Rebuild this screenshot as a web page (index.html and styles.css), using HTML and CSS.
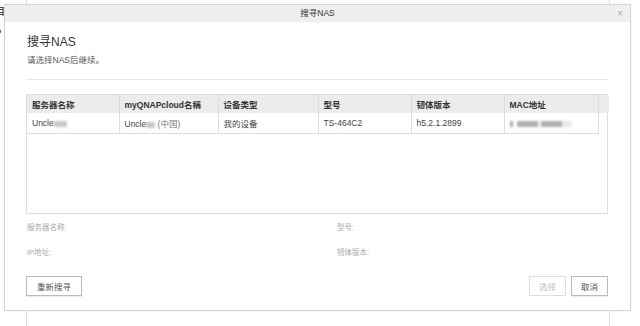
FILE: index.html
```html
<!DOCTYPE html>
<html lang="zh-CN">

<head>
    <meta charset="UTF-8">
    <meta name="viewport" content="width=device-width, initial-scale=1.0">
    <title>搜寻NAS</title>

    <link rel="stylesheet" href="styles.css">
</head>

<body>
    <div class="page">
        <div class="page-text">
            <p>自</p>
            <p>P</p>
        </div>
        <div class="page-panel"></div>
    </div>

    <div class="dialog">
        <div class="dialog-title">
            <span>搜寻NAS</span>
            <button class="close-btn" type="button">×</button>
        </div>

        <div class="dialog-body">
            <h2>搜寻NAS</h2>
            <p class="subtitle">请选择NAS后继续。</p>
            <hr class="separator">

            <div class="table-box">
                <table class="nas-table">
                    <thead>
                        <tr>
                            <th class="col-1">服务器名称</th>
                            <th class="col-2">myQNAPcloud名稱</th>
                            <th class="col-3">设备类型</th>
                            <th class="col-4">型号</th>
                            <th class="col-5">韧体版本</th>
                            <th class="col-6">MAC地址</th>
                            <th class="gutter"></th>
                        </tr>
                    </thead>
                    <tbody>
                        <tr>
                            <td>Uncle<span class="blur blur-name"></span></td>
                            <td>Uncle<span class="blur blur-short"></span> <span class="cn">(中国)</span></td>
                            <td class="muted">我的设备</td>
                            <td>TS-464C2</td>
                            <td>h5.2.1.2899</td>
                            <td><span class="blur blur-mac"></span></td>
                            <td class="gutter"></td>
                        </tr>
                    </tbody>
                </table>
            </div>

            <div class="info-grid">
                <span>服务器名称:</span>
                <span>型号:</span>
                <span>IP地址:</span>
                <span>韧体版本:</span>
            </div>

            <div class="dialog-footer">
                <button class="btn" type="button">重新搜寻</button>
                <div class="footer-right">
                    <button class="btn" type="button" disabled>选择</button>
                    <button class="btn" type="button">取消</button>
                </div>
            </div>
        </div>
    </div>
</body>

</html>
```

FILE: styles.css
```css
* {
    padding: 0;
    margin: 0;
    box-sizing: border-box;
}

body {
    font-family: "Liberation Sans", "Noto Sans CJK SC", sans-serif;
    font-size: 9px;
    color: #333;
    background-color: #fff;
    width: 640px;
    height: 326px;
    overflow: hidden;
}

/* page behind the dialog */
.page {
    display: flex;
    height: 326px;
}

.page-text {
    margin-left: -6px;
    width: 32px;
    font-size: 11px;
    line-height: 22px;
    color: #111;
}

.page-panel {
    width: 584px;
    height: 100%;
    border-left: 1px solid #ddd;
    border-right: 1px solid #ddd;
}

/* dialog */
.dialog {
    position: absolute;
    left: 4px;
    top: 4px;
    width: 627px;
    height: 307px;
    background-color: #fff;
    border: 1px solid #d4d4d4;
    box-shadow: 0 0 2px rgba(0, 0, 0, 0.08);
}

.dialog-title {
    position: relative;
    height: 17px;
    background-color: #efefef;
    text-align: center;
    line-height: 17px;
    font-size: 8.5px;
    color: #333;
}

.close-btn {
    position: absolute;
    right: 7px;
    top: 0;
    border: none;
    background: none;
    font-size: 10px;
    line-height: 17px;
    color: #aaa;
    font-family: "Liberation Sans", sans-serif;
}

.dialog-body {
    padding: 12px 22px 0 21px;
}

h2 {
    font-weight: normal;
    font-size: 12px;
    line-height: 17px;
    color: #333;
    padding-left: 1px;
}

.subtitle {
    margin-top: 3px;
    font-size: 8.5px;
    line-height: 12px;
    color: #555;
    padding-left: 1px;
}

.separator {
    margin-top: 13px;
    border: none;
    border-top: 1px solid #e6e6e6;
}

.table-box {
    margin-top: 14px;
    height: 120px;
    border: 1px solid #dcdcdc;
}

.nas-table {
    border-collapse: collapse;
    table-layout: fixed;
    width: 582px;
}

.nas-table th {
    height: 18px;
    background-color: #ececec;
    text-align: left;
    font-weight: bold;
    font-size: 8.5px;
    color: #333;
    padding: 0 5px;
    border-right: 1px solid #dcdcdc;
}

.nas-table td {
    height: 20px;
    padding: 0 5px;
    font-size: 8.5px;
    color: #444;
    border-right: 1px solid #dcdcdc;
    border-bottom: 1px solid #dcdcdc;
    white-space: nowrap;
}

.nas-table .gutter {
    border: none;
}

.nas-table th.gutter {
    background-color: #ececec;
}

.col-1 { width: 92px; }
.col-2 { width: 99px; }
.col-3 { width: 100px; }
.col-4 { width: 93px; }
.col-5 { width: 93px; }
.col-6 { width: 94px; }
.gutter { width: 11px; }

.muted,
.cn {
    color: #777;
}

.blur {
    display: inline-block;
    height: 6px;
    vertical-align: -1px;
    filter: blur(0.8px);
}

.blur-name {
    width: 13px;
    background-color: #c8c8cc;
}

.blur-short {
    width: 9px;
    background-color: #c8c8cc;
}

.blur-mac {
    width: 62px;
    background: linear-gradient(90deg, #aaa 0 3px, #fff 3px 7px, #b0b0b4 7px 28px, #eee 28px 31px, #b0b0b4 31px 52px, #e8e8e8 52px);
}

/* server info */
.info-grid {
    margin-top: 8px;
    display: grid;
    grid-template-columns: 310px 1fr;
    row-gap: 13px;
    padding-left: 1px;
    font-size: 7.5px;
    line-height: 12px;
    color: #aaa;
}

.dialog-footer {
    margin-top: 17px;
    display: flex;
    justify-content: space-between;
}

.footer-right {
    display: flex;
    column-gap: 5px;
}

.btn {
    height: 20px;
    padding: 0 10px;
    background-color: #fff;
    border: 1px solid #bbb;
    font-family: "Liberation Sans", "Noto Sans CJK SC", sans-serif;
    font-size: 8.5px;
    color: #555;
    box-shadow: 0 1px 1px rgba(0, 0, 0, 0.08);
}

.footer-right .btn {
    width: 37px;
    padding: 0;
}

.btn:disabled {
    border-color: #ddd;
    color: #bbb;
    box-shadow: none;
}
```
